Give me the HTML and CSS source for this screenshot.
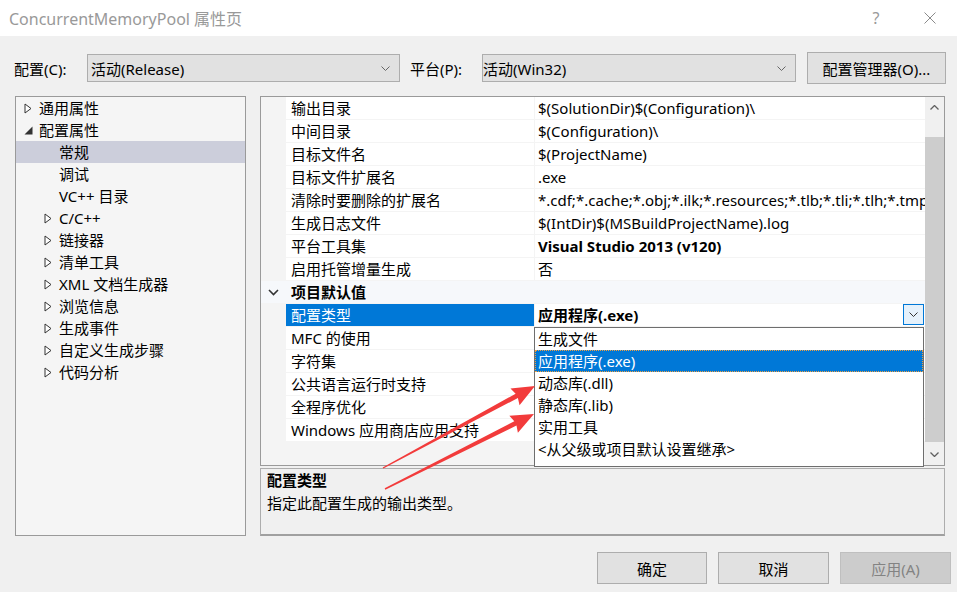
FILE: index.html
```html
<!DOCTYPE html>
<html lang="zh-CN">
<head>
  <meta charset="UTF-8">
  <title>ConcurrentMemoryPool 属性页</title>
  <link rel="stylesheet" href="styles.css">
</head>
<body>
  <div class="titlebar">
    <span class="title">ConcurrentMemoryPool 属性页</span>
    <span class="help">?</span>
    <svg class="close" width="12" height="12" viewBox="0 0 12 12"><path d="M0.5 0.5 L11.5 11.5 M11.5 0.5 L0.5 11.5" stroke="#8a8a8a" stroke-width="1" fill="none"/></svg>
  </div>

  <div class="main">
    <div class="config-row">
      <span class="lbl">配置(C):</span>
      <div class="select sel-config">
        <span>活动(Release)</span>
        <svg width="9" height="5" viewBox="0 0 9 5"><path d="M0.5 0.5 L4.5 4.5 L8.5 0.5" stroke="#666" fill="none"/></svg>
      </div>
      <span class="lbl lbl-platform">平台(P):</span>
      <div class="select sel-platform">
        <span>活动(Win32)</span>
        <svg width="9" height="5" viewBox="0 0 9 5"><path d="M0.5 0.5 L4.5 4.5 L8.5 0.5" stroke="#666" fill="none"/></svg>
      </div>
      <button class="btn btn-mgr">配置管理器(O)...</button>
    </div>

    <div class="body">
      <div class="tree">
        <div class="node lvl0"><span class="twisty"><svg width="8" height="11" viewBox="0 0 8 11"><path d="M1 1 L7 5.5 L1 10 Z" fill="#fff" stroke="#333"/></svg></span>通用属性</div>
        <div class="node lvl0"><span class="twisty"><svg width="9" height="9" viewBox="0 0 9 9"><path d="M8.5 0.5 L8.5 8.5 L0.5 8.5 Z" fill="#333"/></svg></span>配置属性</div>
        <div class="node lvl1 selected"><span class="twisty"></span>常规</div>
        <div class="node lvl1"><span class="twisty"></span>调试</div>
        <div class="node lvl1"><span class="twisty"></span>VC++ 目录</div>
        <div class="node lvl1"><span class="twisty"><svg width="8" height="11" viewBox="0 0 8 11"><path d="M1 1 L7 5.5 L1 10 Z" fill="#fff" stroke="#333"/></svg></span>C/C++</div>
        <div class="node lvl1"><span class="twisty"><svg width="8" height="11" viewBox="0 0 8 11"><path d="M1 1 L7 5.5 L1 10 Z" fill="#fff" stroke="#333"/></svg></span>链接器</div>
        <div class="node lvl1"><span class="twisty"><svg width="8" height="11" viewBox="0 0 8 11"><path d="M1 1 L7 5.5 L1 10 Z" fill="#fff" stroke="#333"/></svg></span>清单工具</div>
        <div class="node lvl1"><span class="twisty"><svg width="8" height="11" viewBox="0 0 8 11"><path d="M1 1 L7 5.5 L1 10 Z" fill="#fff" stroke="#333"/></svg></span>XML 文档生成器</div>
        <div class="node lvl1"><span class="twisty"><svg width="8" height="11" viewBox="0 0 8 11"><path d="M1 1 L7 5.5 L1 10 Z" fill="#fff" stroke="#333"/></svg></span>浏览信息</div>
        <div class="node lvl1"><span class="twisty"><svg width="8" height="11" viewBox="0 0 8 11"><path d="M1 1 L7 5.5 L1 10 Z" fill="#fff" stroke="#333"/></svg></span>生成事件</div>
        <div class="node lvl1"><span class="twisty"><svg width="8" height="11" viewBox="0 0 8 11"><path d="M1 1 L7 5.5 L1 10 Z" fill="#fff" stroke="#333"/></svg></span>自定义生成步骤</div>
        <div class="node lvl1"><span class="twisty"><svg width="8" height="11" viewBox="0 0 8 11"><path d="M1 1 L7 5.5 L1 10 Z" fill="#fff" stroke="#333"/></svg></span>代码分析</div>
      </div>

      <div class="right">
        <div class="grid">
          <div class="rows">
            <div class="row"><span class="gutter"></span><span class="name">输出目录</span><span class="value">$(SolutionDir)$(Configuration)\</span></div>
            <div class="row"><span class="gutter"></span><span class="name">中间目录</span><span class="value">$(Configuration)\</span></div>
            <div class="row"><span class="gutter"></span><span class="name">目标文件名</span><span class="value">$(ProjectName)</span></div>
            <div class="row"><span class="gutter"></span><span class="name">目标文件扩展名</span><span class="value">.exe</span></div>
            <div class="row"><span class="gutter"></span><span class="name">清除时要删除的扩展名</span><span class="value">*.cdf;*.cache;*.obj;*.ilk;*.resources;*.tlb;*.tli;*.tlh;*.tmp;*.rsp;*.pgc;*.pgd;*.meta;*.tlog;*.manifest;*.res;*.pch;*.exp</span></div>
            <div class="row"><span class="gutter"></span><span class="name">生成日志文件</span><span class="value">$(IntDir)$(MSBuildProjectName).log</span></div>
            <div class="row"><span class="gutter"></span><span class="name">平台工具集</span><span class="value bold">Visual Studio 2013 (v120)</span></div>
            <div class="row"><span class="gutter"></span><span class="name">启用托管增量生成</span><span class="value">否</span></div>
            <div class="row section">
              <span class="gutter"><svg width="11" height="7" viewBox="0 0 11 7"><path d="M1 1 L5.5 5.5 L10 1" stroke="#333" stroke-width="1.6" fill="none"/></svg></span>
              <span class="name bold">项目默认值</span><span class="value"></span>
            </div>
            <div class="row current">
              <span class="gutter"></span><span class="name">配置类型</span>
              <span class="value bold">应用程序(.exe)
                <span class="drop-btn"><svg width="9" height="5" viewBox="0 0 9 5"><path d="M0.5 0.5 L4.5 4.5 L8.5 0.5" stroke="#333" fill="none"/></svg></span>
              </span>
            </div>
            <div class="row"><span class="gutter"></span><span class="name">MFC 的使用</span><span class="value"></span></div>
            <div class="row"><span class="gutter"></span><span class="name">字符集</span><span class="value"></span></div>
            <div class="row"><span class="gutter"></span><span class="name">公共语言运行时支持</span><span class="value"></span></div>
            <div class="row"><span class="gutter"></span><span class="name">全程序优化</span><span class="value"></span></div>
            <div class="row"><span class="gutter"></span><span class="name">Windows 应用商店应用支持</span><span class="value"></span></div>
          </div>
          <div class="scrollbar">
            <div class="sb-btn sb-up"><svg width="9" height="5" viewBox="0 0 9 5"><path d="M0.5 4.5 L4.5 0.5 L8.5 4.5" stroke="#606060" stroke-width="1.3" fill="none"/></svg></div>
            <div class="sb-space"></div>
            <div class="sb-thumb"></div>
            <div class="sb-fill"></div>
            <div class="sb-btn sb-down"><svg width="9" height="5" viewBox="0 0 9 5"><path d="M0.5 0.5 L4.5 4.5 L8.5 0.5" stroke="#606060" stroke-width="1.3" fill="none"/></svg></div>
          </div>

          <ul class="dropdown">
            <li>生成文件</li>
            <li class="hot">应用程序(.exe)</li>
            <li>动态库(.dll)</li>
            <li>静态库(.lib)</li>
            <li>实用工具</li>
            <li>&lt;从父级或项目默认设置继承&gt;</li>
          </ul>
        </div>

        <div class="desc">
          <div class="desc-title">配置类型</div>
          <div>指定此配置生成的输出类型。</div>
        </div>
      </div>
    </div>

    <div class="buttons">
      <button class="btn btn-ok">确定</button>
      <button class="btn btn-cancel">取消</button>
      <button class="btn btn-apply" disabled>应用(A)</button>
    </div>
  </div>

  <!-- annotation arrows drawn over the dialog -->
  <svg class="arrows" width="957" height="592" viewBox="0 0 957 592">
    <g transform="translate(383 468) rotate(-28.35)">
      <path d="M0 -0.7 L152 -2.4 L150 -9.5 L172.7 0 L150 9.5 L152 2.4 L0 0.7 Z" fill="#f23b3b"/>
    </g>
    <g transform="translate(385 489) rotate(-26.72)">
      <path d="M0 -0.7 L146 -2.4 L144 -9.5 L166.8 0 L144 9.5 L146 2.4 L0 0.7 Z" fill="#f23b3b"/>
    </g>
  </svg>
</body>
</html>
```

FILE: styles.css
```css
body {
  margin: 0;
  width: 957px;
  height: 592px;
  overflow: hidden;
  position: relative;
  background-color: #f0f0f0;
  color: #000;
  font-family: "Noto Sans", "Noto Sans CJK SC", sans-serif;
  font-size: 15px;
}
.titlebar {
  height: 36px;
  background-color: #fff;
  display: flex;
  align-items: center;
  padding-left: 9px;
}
.title {
  flex: 1;
  color: #999;
  font-size: 16px;
}
.help {
  width: 20px;
  text-align: center;
  color: #999;
  font-size: 16px;
  margin-right: 38px;
}
.close {
  margin-right: 21px;
}
.main {
  padding: 16px 11px 0 14px;
}
.config-row {
  display: flex;
  align-items: center;
  height: 32px;
}
.lbl {
  width: 73px;
}
.lbl-platform {
  width: 72px;
  margin-left: 10px;
}
.select {
  height: 28px;
  box-sizing: border-box;
  border: 1px solid #adadad;
  background-color: #e1e1e1;
  display: flex;
  align-items: center;
  justify-content: space-between;
  padding: 0 9px 0 3px;
}
.sel-config {
  width: 313px;
}
.sel-platform {
  width: 314px;
  padding-left: 0;
}
.btn {
  box-sizing: border-box;
  height: 32px;
  border: 1px solid #adadad;
  background-color: #e1e1e1;
  font-family: inherit;
  font-size: 15px;
  color: #000;
  padding: 0;
}
.btn-mgr {
  width: 139px;
  margin-left: 11px;
}
.body {
  display: flex;
  margin-top: 12px;
  height: 440px;
}
.tree {
  width: 231px;
  box-sizing: border-box;
  border: 1px solid #9a9a9a;
  background-color: #f5f5f5;
  margin-left: 1px;
  margin-right: 14px;
}
.node {
  height: 22px;
  line-height: 22px;
  display: flex;
  align-items: center;
  white-space: nowrap;
}
.node.lvl0 {
  padding-left: 8px;
}
.node.lvl1 {
  padding-left: 28px;
}
.node.selected {
  background-color: #cccedb;
}
.twisty {
  width: 15px;
  height: 22px;
  display: flex;
  align-items: center;
}
.right {
  width: 685px;
  display: flex;
  flex-direction: column;
  gap: 2px;
}
.grid {
  position: relative;
  height: 370px;
  box-sizing: border-box;
  border: 1px solid #9a9a9a;
  background-color: #f4f4f4;
  display: flex;
}
.rows {
  flex: 1;
  overflow: hidden;
}
.row {
  display: grid;
  grid-template-columns: 24px 248px 1fr;
  column-gap: 1px;
  height: 22px;
  line-height: 22px;
  margin-bottom: 1px;
  white-space: nowrap;
}
.row .name,
.row .value {
  background-color: #fff;
  overflow: hidden;
}
.row .name {
  padding-left: 5px;
}
.row .value {
  padding-left: 3px;
  position: relative;
}
.bold {
  font-weight: bold;
}
.row.section {
  background-color: #f6f8fb;
}
.row.section .name,
.row.section .value {
  background-color: transparent;
}
.row.section .gutter {
  display: flex;
  align-items: center;
  padding-left: 7px;
}
.row.current .name {
  background-color: #0078d7;
  color: #fff;
}
.drop-btn {
  position: absolute;
  right: 1px;
  top: 0;
  width: 21px;
  height: 21px;
  box-sizing: border-box;
  border: 1px solid #0078d7;
  background-color: #e5f1fb;
  display: flex;
  align-items: center;
  justify-content: center;
}
.scrollbar {
  width: 19px;
  display: flex;
  flex-direction: column;
  background-color: #f0f0f0;
}
.sb-btn {
  display: flex;
  align-items: center;
  justify-content: center;
}
.sb-up {
  height: 20px;
}
.sb-space {
  height: 20px;
}
.sb-thumb {
  height: 305px;
  background-color: #cdcdcd;
}
.sb-fill {
  flex: 1;
}
.sb-down {
  height: 22px;
}
.dropdown {
  position: absolute;
  left: 273px;
  top: 230px;
  width: 390px;
  height: 140px;
  box-sizing: border-box;
  margin: 0;
  padding: 0;
  list-style: none;
  border: 1px solid #6e6e6e;
  background-color: #fff;
  z-index: 2;
}
.dropdown li {
  height: 22px;
  line-height: 22px;
  padding-left: 3px;
  white-space: nowrap;
}
.dropdown li.hot {
  background-color: #0078d7;
  color: #fff;
  outline: 1px dotted #f0a040;
  outline-offset: -1px;
}
.desc {
  height: 68px;
  box-sizing: border-box;
  border: 1px solid #adadad;
  border-bottom: 2px solid #a0a0a0;
  padding: 0 6px;
  line-height: 23px;
}
.desc-title {
  font-weight: bold;
}
.buttons {
  display: flex;
  justify-content: flex-end;
  gap: 11px;
  margin-top: 16px;
  margin-right: -5px;
}
.btn-ok {
  width: 110px;
}
.btn-cancel,
.btn-apply {
  width: 111px;
}
.btn-apply {
  background-color: #cccccc;
  border-color: #bfbfbf;
  color: #838383;
}
.arrows {
  position: absolute;
  left: 0;
  top: 0;
  pointer-events: none;
  z-index: 5;
}
```
